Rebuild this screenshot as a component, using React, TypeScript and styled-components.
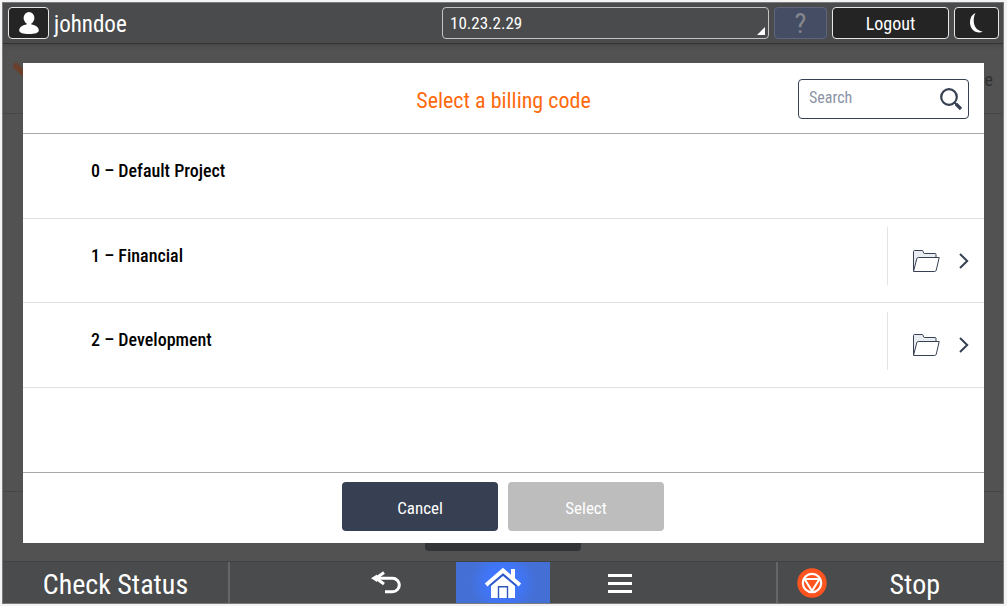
import React from "react";
import styled, { createGlobalStyle, css } from "styled-components";

const GlobalStyle = createGlobalStyle`
  *, *::before, *::after { box-sizing: border-box; }
  body { margin: 0; background: #f4f4f4; }
  body, button, input, select {
    font-family: "Roboto Condensed", Roboto, "Noto Sans", sans-serif;
  }
  button { cursor: pointer; }
  button:disabled { cursor: default; }
`;

const Screen = styled.div`
  display: flex;
  flex-direction: column;
  min-height: 100vh;
  padding: 2px 3px 2px 2px;
`;

const Panel = styled.div`
  display: flex;
  flex: 1;
  flex-direction: column;
  border: 1px solid #7b7b7b;
  background: #4a4b4c;
`;

const TopBar = styled.header`
  display: flex;
  align-items: center;
  gap: 5px;
  height: 41px;
  padding: 0 4px 0 5px;
  border-bottom: 1px solid #333;
`;

const UserName = styled.span`
  flex: 1;
  padding-top: 3px;
  color: #fff;
  font-size: 23px;
  line-height: 32px;
`;

const TopButton = styled.button<{ $width: number }>`
  display: flex;
  align-items: center;
  justify-content: center;
  width: ${(p) => p.$width}px;
  height: 32px;
  padding: 0;
  border: 1px solid #e6e6e6;
  border-radius: 4px;
  background: #242424;
  color: #fff;
  font-size: 18px;

  &:disabled {
    border-color: #5d667c;
    background: #444d63;
    color: #85878c;
    font-size: 28px;
  }
`;

const TopActions = styled.div`
  display: flex;
  gap: 5px;
`;

const AddressField = styled.div`
  position: relative;
  width: 327px;
`;

const AddressSelect = styled.select`
  appearance: none;
  display: block;
  width: 100%;
  height: 32px;
  padding: 0 7px;
  border: 1px solid #c4c4c4;
  border-radius: 4px;
  background: #4a4b4c;
  color: #fff;
  font-size: 17px;
`;

const Corner = styled.svg`
  position: absolute;
  right: 4px;
  bottom: 4px;
  pointer-events: none;
`;

const Stage = styled.main`
  position: relative;
  display: flex;
  flex: 1;
  padding: 19px 19px 18px 20px;
  background: #525252;
`;

const Backdrop = styled.div`
  position: absolute;
  inset: 0;
  display: flex;
  flex-direction: column;
  justify-content: space-between;
  overflow: hidden;
  box-shadow: inset 0 3px 4px -1px #484848;
`;

const BackdropHead = styled.div`
  display: flex;
  align-items: flex-start;
  justify-content: space-between;
  height: 70px;
  padding: 18px 10px 0 10px;
  border-bottom: 1px solid #464646;
  color: #303030;
  font-size: 18px;
  line-height: 36px;
`;

const BackdropFoot = styled.div`
  display: flex;
  align-items: flex-end;
  justify-content: center;
  height: 70px;
  padding-bottom: 10px;
  border-top: 1px solid #464646;
`;

const BackdropButton = styled.div`
  width: 156px;
  height: 48px;
  border-radius: 4px;
  background: #333435;
`;

const Dialog = styled.section`
  position: relative;
  display: flex;
  flex: 1;
  flex-direction: column;
  background: #fff;
`;

const DialogHead = styled.div`
  display: grid;
  grid-template-columns: 1fr auto 1fr;
  align-items: center;
  height: 71px;
  padding: 2px 15px 0;
  border-bottom: 1px solid #a9a9a9;
`;

const DialogTitle = styled.h1`
  grid-column: 2;
  margin: 0;
  padding-top: 4px;
  color: #ff6a0d;
  font-size: 22px;
  font-weight: 400;
  line-height: 32px;
`;

const SearchBox = styled.label`
  display: flex;
  align-items: center;
  justify-self: end;
  width: 171px;
  height: 40px;
  padding: 0 5px 0 10px;
  border: 1px solid #364052;
  border-radius: 4px;
`;

const SearchInput = styled.input`
  flex: 1;
  min-width: 0;
  height: 32px;
  padding: 0 0 4px;
  border: 0;
  outline: 0;
  background: none;
  color: #364052;
  font-size: 16px;

  &::placeholder { color: #8b94a6; opacity: 1; }
`;

const CodeList = styled.ul`
  display: grid;
  flex: 1;
  grid-template-rows: repeat(4, 1fr);
  margin: 0;
  padding: 0;
  list-style: none;
`;

const CodeRow = styled.li`
  display: flex;
  align-items: center;
  padding-left: 68px;
  border-bottom: 1px solid #e0e1e2;
`;

const CodeName = styled.button`
  flex: 1;
  align-self: stretch;
  padding: 0 0 10px;
  border: 0;
  background: none;
  color: #000;
  font-size: 18px;
  font-weight: 500;
  text-align: left;
`;

const OpenButton = styled.button`
  display: flex;
  align-items: center;
  justify-content: space-between;
  width: 97px;
  height: 58px;
  margin-top: -8px;
  padding: 9px 15px 0 24px;
  border: 0;
  border-left: 1px solid #e3e4e6;
  background: none;
`;

const DialogFoot = styled.div`
  display: flex;
  align-items: center;
  justify-content: center;
  gap: 10px;
  height: 71px;
  padding: 0 1px 3px 0;
  border-top: 1px solid #a9a9a9;
`;

const DialogButton = styled.button`
  width: 156px;
  height: 49px;
  padding: 2px 0 0;
  border: 0;
  border-radius: 4px;
  background: #364052;
  color: #fff;
  font-size: 17px;

  &:disabled { background: #bdbdbd; }
`;

const BottomBar = styled.nav`
  display: grid;
  grid-template-columns: 227fr 226fr 94fr 226fr 227fr;
  height: 42px;
  border-top: 1px solid #414243;
`;

const barItem = css`
  display: flex;
  align-items: center;
  padding: 0;
  border: 0;
  background: none;
  color: #fff;
  font-size: 28px;
  line-height: 36px;
`;

const BarLabel = styled.span`
  padding-top: 4px;
`;

const StatusButton = styled.button`
  ${barItem}
  justify-content: center;
  border-right: 2px solid #666;
`;

const BackButton = styled.button`
  ${barItem}
  justify-content: flex-end;
  padding-right: 55px;
`;

const HomeButton = styled.button`
  ${barItem}
  justify-content: center;
  background: radial-gradient(circle at center, #3f76ff 0 14px, #4470d6 32px);
`;

const MenuButton = styled.button`
  ${barItem}
  padding: 2px 0 0 58px;
`;

const StopButton = styled.button`
  ${barItem}
  justify-content: space-between;
  padding: 0 63px 0 19px;
  border-left: 2px solid #666;
`;

const PersonIcon = () => (
  <svg width="22" height="24" viewBox="0 0 22 24" fill="#fff" aria-hidden="true">
    <ellipse cx="11" cy="7" rx="5.400" ry="6" />
    <path d="M8.600 11h4.800v2.600c4.200.500 7.400 2.800 7.400 5.800 0 2.200-3.800 3.600-9.800 3.600S1.200 21.600 1.200 19.400c0-3 3.200-5.300 7.400-5.800z" />
  </svg>
);

const MoonIcon = () => (
  <svg width="16" height="22" viewBox="0 0 16 22" fill="#fff" aria-hidden="true">
    <path d="M6.500 1C2.900 2.600 1 6 1 10.200c0 5.600 3.700 10.200 9.200 10.200 1.400 0 2.600-.3 3.600-.9C8.800 19 5.500 15.600 4.900 10.800 4.400 7.200 4.900 3.800 6.500 1z" />
  </svg>
);

const CheckIcon = () => (
  <svg width="56" height="36" viewBox="0 0 56 36" fill="none" aria-hidden="true">
    <path d="M3 4l9 9" stroke="#6a402c" strokeWidth="6" strokeLinecap="round" />
    <circle cx="53" cy="4" r="3" fill="#6a402c" />
  </svg>
);

const SearchIcon = () => (
  <svg width="24" height="24" viewBox="0 0 24 24" fill="none" stroke="#364052" aria-hidden="true">
    <circle cx="10" cy="10" r="7.800" strokeWidth="2.200" />
    <path d="M15.500 15.500l2 2" strokeWidth="2" />
    <path d="M17 17l5 5" strokeWidth="3.200" />
  </svg>
);

const FolderIcon = () => (
  <svg width="28" height="24" viewBox="0 0 28 24" stroke="#364052" strokeLinejoin="round" aria-hidden="true">
    <path d="M1.500 22V2.500q0-1 1-1H10q1 0 1.200 1l.4 1.500q.2.500 1 .5H23q1 0 1 1V9" fill="#e9edf1" />
    <path d="M1.500 22.500L4.700 10Q5 8.500 6.300 8.500H27.200L24.300 21q-.4 1.500-1.700 1.500z" fill="#fff" />
  </svg>
);

const ChevronIcon = () => (
  <svg width="10" height="16" viewBox="0 0 10 16" fill="none" stroke="#364052" strokeWidth="2" aria-hidden="true">
    <path d="M1 1l7.200 7L1 15" />
  </svg>
);

const BackIcon = () => (
  <svg width="30" height="24" viewBox="0 0 30 24" fill="none" stroke="#fff" strokeWidth="3" aria-hidden="true">
    <path d="M13 1.500L5 7.200M13 13L5 7.200" />
    <path d="M0 7.200L6 3.500v7.400z" fill="#fff" stroke="none" />
    <path d="M3 7.200h18.500a6.800 6.800 0 0 1 0 13.600H14" />
  </svg>
);

const HomeIcon = () => (
  <svg width="38" height="32" viewBox="0 0 38 32" fill="#fff" aria-hidden="true">
    <path d="M27 2h4v11l-4-4z" />
    <path d="M19 9L7 19V31h24V19z" />
    <path d="M19 .8L.8 16.600l2.600 2.800L19 6.200l15.600 13.200 2.600-2.800z" />
    <path d="M5.500 18.800L19 7.400l13.500 11.400" fill="none" stroke="#2f55b8" strokeWidth="1.400" />
    <path d="M14.500 31V19.700h9V31" fill="none" stroke="#2f55b8" strokeWidth="1.400" />
  </svg>
);

const MenuIcon = () => (
  <svg width="24" height="20" viewBox="0 0 24 20" fill="#fff" aria-hidden="true">
    <path d="M0 0h24v3H0zM0 8h24v3H0zM0 16h24v3H0z" />
  </svg>
);

const StopIcon = () => (
  <svg width="30" height="30" viewBox="0 0 30 30" fill="none" stroke="#fff" strokeWidth="2.200" aria-hidden="true">
    <circle cx="15" cy="15" r="14.700" fill="#ff5420" stroke="none" />
    <circle cx="15" cy="15" r="9.200" />
    <path d="M7.500 11h15L15 23z" strokeLinejoin="round" />
  </svg>
);

const codes = [
  { id: 0, name: "Default Project", folder: false },
  { id: 1, name: "Financial", folder: true },
  { id: 2, name: "Development", folder: true },
];

export default function App() {
  return (
    <Screen>
      <GlobalStyle />
      <Panel>
        <TopBar>
          <TopButton $width={41} aria-label="User">
            <PersonIcon />
          </TopButton>
          <UserName>johndoe</UserName>
          <AddressField>
            <AddressSelect aria-label="Address" defaultValue="10.23.2.29">
              <option>10.23.2.29</option>
            </AddressSelect>
            <Corner width="8" height="8" viewBox="0 0 8 8" aria-hidden="true">
              <path d="M8 0v8H0z" fill="#fff" />
            </Corner>
          </AddressField>
          <TopActions>
            <TopButton $width={53} disabled aria-label="Help">?</TopButton>
            <TopButton $width={117}>Logout</TopButton>
            <TopButton $width={45} aria-label="Sleep">
              <MoonIcon />
            </TopButton>
          </TopActions>
        </TopBar>

        <Stage>
          <Backdrop aria-hidden="true">
            <BackdropHead>
              <CheckIcon />
              <span>e</span>
            </BackdropHead>
            <BackdropFoot>
              <BackdropButton />
            </BackdropFoot>
          </Backdrop>

          <Dialog role="dialog" aria-labelledby="dialog-title">
            <DialogHead>
              <DialogTitle id="dialog-title">Select a billing code</DialogTitle>
              <SearchBox>
                <SearchInput type="text" placeholder="Search" aria-label="Search" />
                <SearchIcon />
              </SearchBox>
            </DialogHead>
            <CodeList>
              {codes.map((code) => (
                <CodeRow key={code.id}>
                  <CodeName>
                    {code.id} – {code.name}
                  </CodeName>
                  {code.folder && (
                    <OpenButton aria-label={`Open ${code.name}`}>
                      <FolderIcon />
                      <ChevronIcon />
                    </OpenButton>
                  )}
                </CodeRow>
              ))}
            </CodeList>
            <DialogFoot>
              <DialogButton>Cancel</DialogButton>
              <DialogButton disabled>Select</DialogButton>
            </DialogFoot>
          </Dialog>
        </Stage>

        <BottomBar>
          <StatusButton>
            <BarLabel>Check Status</BarLabel>
          </StatusButton>
          <BackButton aria-label="Back">
            <BackIcon />
          </BackButton>
          <HomeButton aria-label="Home">
            <HomeIcon />
          </HomeButton>
          <MenuButton aria-label="Menu">
            <MenuIcon />
          </MenuButton>
          <StopButton>
            <StopIcon />
            <BarLabel>Stop</BarLabel>
          </StopButton>
        </BottomBar>
      </Panel>
    </Screen>
  );
}
